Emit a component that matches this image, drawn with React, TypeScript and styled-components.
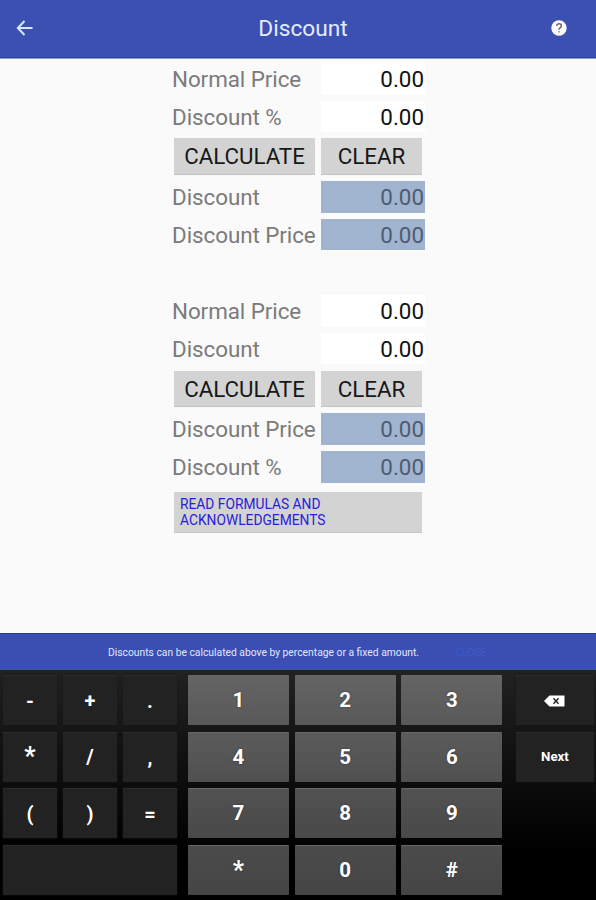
import React from 'react';
import styled, { createGlobalStyle } from 'styled-components';

const GlobalStyle = createGlobalStyle`
  * { box-sizing: border-box; }
  body { margin: 0; background: #fafafa; }
  button { border: 0; margin: 0; padding: 0; font: inherit; color: inherit; }
`;

const Screen = styled.div`
  width: 596px;
  height: 900px;
  display: flex;
  flex-direction: column;
  background: #fafafa;
  font-family: Roboto, sans-serif;
  overflow: hidden;
`;

const AppBar = styled.header`
  height: 59px;
  flex: none;
  display: grid;
  grid-template-columns: 48px 1fr 74px;
  align-items: center;
  background: #3c50b1;
  border-bottom: 1px solid #8aa0d2;
  box-shadow: inset 0 -1px 0 #2d449c;
  color: #e4ecff;
`;

const IconButton = styled.button<{ $align: 'start' | 'center' }>`
  display: flex;
  justify-content: ${(p) => p.$align};
  padding: ${(p) => (p.$align === 'start' ? '0 0 2px 16px' : '0 0 2px')};
  background: none;
`;

const Title = styled.h1`
  margin: 0;
  padding: 0 0 1px 36px;
  font-size: 22.7px;
  font-weight: 400;
  line-height: 30px;
  text-align: center;
`;

const Content = styled.main`
  flex: 1;
  padding: 4px 0 0 172px;
`;

const Form = styled.form`
  display: grid;
  grid-template-columns: 149px 104px;
  grid-template-rows: 31.5px 31.5px 36.5px 31.5px 31.5px;
  row-gap: 6.2px;
  height: 232.3px;
  align-items: stretch;
`;

const Label = styled.label`
  font-size: 22.4px;
  line-height: 33px;
  letter-spacing: -0.06px;
  color: #7b7b7b;
  white-space: nowrap;
`;

const Value = styled.output<{ $result?: boolean }>`
  padding-right: 1px;
  font-size: 22.4px;
  line-height: 33px;
  text-align: right;
  background: ${(p) => (p.$result ? '#a1b4cf' : '#fff')};
  color: ${(p) => (p.$result ? '#4e5c71' : '#111')};
`;

const Action = styled.button<{ $wide?: boolean }>`
  width: ${(p) => (p.$wide ? 141 : 101)}px;
  margin-left: ${(p) => (p.$wide ? 2 : 0)}px;
  background: #d3d3d3;
  color: #171717;
  font-size: 22.3px;
  line-height: 36px;
  border-bottom: 1px solid #c3c3c3;
`;

const FormulaLink = styled.button`
  display: block;
  width: 248px;
  height: 41px;
  margin: -35.6px 0 0 2px;
  padding: 1px 0 0 6px;
  background: #d3d3d3;
  color: #2a20dc;
  font-size: 13.8px;
  line-height: 15.5px;
  text-align: left;
  border-bottom: 1px solid #c6c6c6;
`;

const Notice = styled.aside`
  height: 37px;
  flex: none;
  display: flex;
  align-items: center;
  padding: 1px 0 0 108px;
  background: #3b4eb1;
  border-top: 1px solid #2338a0;
  color: #e0e8ff;
  font-size: 10.3px;
  white-space: nowrap;
`;

const Message = styled.span`
  width: 347px;
`;

const Close = styled.button`
  background: none;
  color: #4159c9;
  font-size: 10.5px;
`;

const Keyboard = styled.section`
  height: 230px;
  flex: none;
  display: flex;
  align-items: flex-start;
  padding: 5px 2px 5px 3px;
  background: linear-gradient(#222 0, #111 38%, #000 80%);
  color: #fff;
  font-size: 20px;
  font-weight: 700;
`;

const KeyGroup = styled.div<{ $columns: string; $gap: number; $after?: number }>`
  display: grid;
  grid-template-columns: ${(p) => p.$columns};
  grid-auto-rows: 50px;
  gap: 6.5px ${(p) => p.$gap}px;
  margin-right: ${(p) => p.$after ?? 0}px;
`;

const DarkKey = styled.button<{ $span?: number; $size?: number }>`
  display: flex;
  align-items: center;
  justify-content: center;
  grid-column: span ${(p) => p.$span ?? 1};
  background: #222;
  border-top: 1px solid #2b2b2b;
  box-shadow: 0 0 2px #181818;
  font-size: ${(p) => p.$size ?? 20}px;
  line-height: 24px;
`;

const tones = ['#646464, #595959', '#5b5b5b, #505050', '#525252, #494949', '#4b4b4b, #454545'];

const NumberKey = styled.button<{ $row: number; $size: number }>`
  background: linear-gradient(${(p) => tones[p.$row]});
  border-top: 1px solid #686868;
  border-radius: 1px;
  font-size: ${(p) => p.$size}px;
  line-height: 49px;
  text-shadow: 0 0 2px #333;
`;

const symbols = ['-', '+', '.', '*', '/', ',', '(', ')', '='];
const digits = ['1', '2', '3', '4', '5', '6', '7', '8', '9', '*', '0', '#'];

const BackIcon = () => (
  <svg width="17" height="16" viewBox="0 0 17 16" fill="none" stroke="#d8e7ff" strokeWidth="2">
    <path d="M8.5 1 1.8 8l6.7 7M2 8h14.5" />
  </svg>
);

const HelpIcon = () => (
  <svg width="16" height="16" viewBox="0 0 16 16" fill="none">
    <circle cx="8" cy="8" r="7.7" fill="#fff" />
    <path d="M5.6 6.1C5.6 4.7 6.5 3.8 8 3.8s2.4.9 2.4 2.1c0 1.6-2.4 1.9-2.4 3.8" stroke="#626779" strokeWidth="1.5" />
    <path d="M7.2 11h1.6v1.6H7.2z" fill="#8796a2" />
  </svg>
);

const BackspaceIcon = () => (
  <svg width="21" height="12" viewBox="0 0 21 12">
    <path d="M0 6 5.5.5h15v11h-15z" fill="#fff" />
    <path d="m9.5 3.3 5 5.4m0-5.4-5 5.4" stroke="#222" strokeWidth="1.4" />
  </svg>
);

type CalculatorProps = { inputs: string[]; results: string[] };

function Calculator({ inputs, results }: CalculatorProps) {
  return (
    <Form onSubmit={(e) => e.preventDefault()}>
      {inputs.map((name) => (
        <React.Fragment key={name}>
          <Label>{name}</Label>
          <Value>0.00</Value>
        </React.Fragment>
      ))}
      <Action type="button" $wide>CALCULATE</Action>
      <Action type="button">CLEAR</Action>
      {results.map((name) => (
        <React.Fragment key={name}>
          <Label>{name}</Label>
          <Value $result>0.00</Value>
        </React.Fragment>
      ))}
    </Form>
  );
}

export default function App() {
  return (
    <Screen>
      <GlobalStyle />
      <AppBar>
        <IconButton $align="start" aria-label="Back"><BackIcon /></IconButton>
        <Title>Discount</Title>
        <IconButton $align="center" aria-label="Help"><HelpIcon /></IconButton>
      </AppBar>
      <Content>
        <Calculator inputs={['Normal Price', 'Discount %']} results={['Discount', 'Discount Price']} />
        <Calculator inputs={['Normal Price', 'Discount']} results={['Discount Price', 'Discount %']} />
        <FormulaLink>READ FORMULAS AND<br />ACKNOWLEDGEMENTS</FormulaLink>
      </Content>
      <Notice>
        <Message>Discounts can be calculated above by percentage or a fixed amount.</Message>
        <Close>CLOSE</Close>
      </Notice>
      <Keyboard>
        <KeyGroup $columns="repeat(3, 54px)" $gap={6} $after={11}>
          {symbols.map((key) => <DarkKey key={key} $size={key === '*' ? 25 : 20}>{key}</DarkKey>)}
          <DarkKey $span={3} aria-label="Space" />
        </KeyGroup>
        <KeyGroup $columns="repeat(3, 101px)" $gap={5.7} $after={13.6}>
          {digits.map((key, i) => (
            <NumberKey key={key} $row={Math.floor(i / 3)} $size={key === '*' ? 25 : 20.5}>{key}</NumberKey>
          ))}
        </KeyGroup>
        <KeyGroup $columns="78px" $gap={0}>
          <DarkKey aria-label="Backspace"><BackspaceIcon /></DarkKey>
          <DarkKey $size={13.3}>Next</DarkKey>
        </KeyGroup>
      </Keyboard>
    </Screen>
  );
}
